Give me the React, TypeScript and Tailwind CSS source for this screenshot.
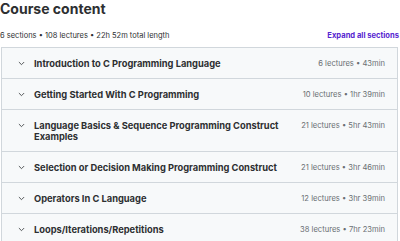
import { FC } from 'react'

interface Section {
  title: string
  lectures: number
  length: string
}

const sections: Section[] = [
  { title: 'Introduction to C Programming Language', lectures: 6, length: '43min' },
  { title: 'Getting Started With C Programming', lectures: 10, length: '1hr 39min' },
  {
    title: 'Language Basics & Sequence Programming Construct Examples',
    lectures: 21,
    length: '5hr 43min',
  },
  {
    title: 'Selection or Decision Making Programming Construct',
    lectures: 21,
    length: '3hr 46min',
  },
  { title: 'Operators In C Language', lectures: 12, length: '3hr 39min' },
  { title: 'Loops/Iterations/Repetitions', lectures: 38, length: '7hr 23min' },
]

const Chevron: FC = () => (
  <svg width="7" height="7" viewBox="0 0 24 24" className="shrink-0 text-[#3e4143]">
    <path d="M4 8l8 8 8-8" fill="none" stroke="currentColor" strokeWidth="3" strokeLinecap="round" strokeLinejoin="round" />
  </svg>
)

const SectionRow: FC<{ section: Section; last?: boolean }> = ({ section, last }) => (
  <div
    className={`flex items-start bg-[#f7f9fa] pl-4 pr-3 pt-[10px] pb-[9px] ${
      last ? '' : 'border-b border-[#d1d7dc]'
    }`}
  >
    <div className="h-[11px] w-[16px] flex items-center">
      <Chevron />
    </div>
    <div className="w-[262px] text-[9.3px] leading-[11px] font-bold text-[#2d2f31]">
      {section.title}
    </div>
    <div className="flex-1 text-right text-[7.6px] leading-[11px] text-[#6a6f73] whitespace-nowrap">
      {section.lectures} lectures • {section.length}
    </div>
  </div>
)

export default function App() {
  return (
    <div className="w-[400px] h-[241px] overflow-hidden bg-white font-['Inter',sans-serif] text-[#2d2f31]">
      <h2 className="text-[14px] leading-[17px] font-bold">Course content</h2>
      <div className="flex items-end justify-between mt-[14px] pr-[1px]">
        <span className="text-[7.5px] leading-[10px] text-[#2d2f31]">
          6 sections • 108 lectures • 22h 52m total length
        </span>
        <button className="text-[7.6px] leading-[10px] font-bold text-[#5624d0]">
          Expand all sections
        </button>
      </div>
      <div className="mt-[6px] ml-[1px] w-[397px] border border-[#d1d7dc]">
        {sections.map((s, i) => (
          <SectionRow key={s.title} section={s} last={i === sections.length - 1} />
        ))}
      </div>
    </div>
  )
}
